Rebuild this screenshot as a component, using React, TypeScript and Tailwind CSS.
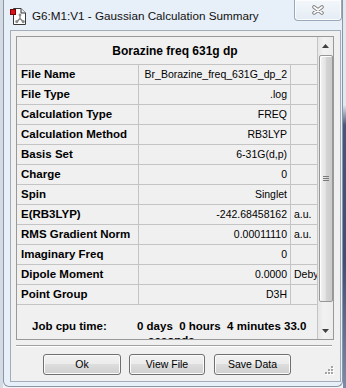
import React from "react";

const rows: [string, string, string][] = [
  ["File Name", "Br_Borazine_freq_631G_dp_2", ""],
  ["File Type", ".log", ""],
  ["Calculation Type", "FREQ", ""],
  ["Calculation Method", "RB3LYP", ""],
  ["Basis Set", "6-31G(d,p)", ""],
  ["Charge", "0", ""],
  ["Spin", "Singlet", ""],
  ["E(RB3LYP)", "-242.68458162", "a.u."],
  ["RMS Gradient Norm", "0.00011110", "a.u."],
  ["Imaginary Freq", "0", ""],
  ["Dipole Moment", "0.0000", "Debye"],
  ["Point Group", "D3H", ""],
];

function AppIcon() {
  return (
    <svg className="ml-[6px] mt-[8px] shrink-0" width="16" height="17" viewBox="0 0 16 17">
      <path d="M3.5 0.5 H11 L15.5 5 V16.5 H3.5 Z" fill="#ffffff" stroke="#3a3a3a" strokeWidth="1" />
      <path d="M11 0.5 V5 H15.5" fill="#e8e8e8" stroke="#3a3a3a" strokeWidth="1" />
      <line x1="10" y1="7" x2="10" y2="10.5" stroke="#7d7d7d" strokeWidth="1.2" />
      <line x1="10" y1="10.5" x2="7" y2="13.5" stroke="#7d7d7d" strokeWidth="1.2" />
      <line x1="10" y1="10.5" x2="13" y2="13.5" stroke="#7d7d7d" strokeWidth="1.2" />
      <circle cx="10" cy="7" r="1.4" fill="#8c8c8c" />
      <circle cx="6.8" cy="13.6" r="1.6" fill="#8c8c8c" />
      <circle cx="13.2" cy="13.6" r="1.6" fill="#8c8c8c" />
      <rect x="0.5" y="1.5" width="5" height="5" fill="#e3101a" stroke="#6a0a0a" strokeWidth="1" />
    </svg>
  );
}

function Btn({ label, w, ml }: { label: string; w: string; ml: string }) {
  return (
    <div
      className={`${w} ${ml} h-[21px] shrink-0 flex items-center justify-center rounded-[3px] border border-[#707070] bg-[linear-gradient(to_bottom,#f2f2f2_0%,#ebebeb_50%,#dddddd_50%,#cfcfcf_100%)] shadow-[inset_0_0_0_1px_#fbfbfb] text-[10.5px] leading-[13px]`}
    >
      {label}
    </div>
  );
}

export default function App() {
  return (
    <div className="w-[346px] h-[388px] overflow-hidden flex font-['Liberation_Sans',Arial,sans-serif] text-black bg-[#f2f5f8]">
      <div className="w-[3px] h-full shrink-0 bg-[#d4dbe3]" />
      <div className="w-[340px] h-[387px] shrink-0 flex flex-col bg-[#e7eff8] border-x border-b border-[#8a96a6] rounded-b-[6px]">
        {/* title bar */}
        <div className="h-[30px] shrink-0 flex items-start">
          <AppIcon />
          <div className="ml-[6px] mt-[8px] text-[11.7px] leading-[16px] whitespace-nowrap text-[#111]">
            G6:M1:V1 - Gaussian Calculation Summary
          </div>
          <div className="ml-auto w-[48px] h-[21px] shrink-0 flex items-center justify-center border-x border-b border-[#9ba8b7] rounded-b-[4px] bg-[linear-gradient(to_bottom,#f3f7fb,#e4ecf4)] shadow-[inset_0_0_0_1px_#fafcfe]">
            <svg width="14" height="10" viewBox="0 0 14 10">
              <path d="M3 2 L11 8 M11 2 L3 8" stroke="#808080" strokeWidth="3.6" strokeLinecap="round" />
              <path d="M3 2 L11 8 M11 2 L3 8" stroke="#fdfdfd" strokeWidth="1.7" strokeLinecap="round" />
            </svg>
          </div>
        </div>

        {/* client area */}
        <div className="relative ml-[6px] mr-[1px] h-[352px] shrink-0 border border-[#a3adba] bg-[#f0f0f0] flex flex-col">
          {/* panel */}
          <div className="ml-[5px] mt-[5px] w-[318px] h-[304px] shrink-0 border border-[#999999] flex overflow-hidden">
            <div className="w-[301px] shrink-0 border-r border-[#c4c4c4] flex flex-col overflow-hidden">
              <div className="h-[28px] shrink-0 border-b border-[#c4c4c4] flex items-center justify-center pl-[16px] font-bold text-[12px] whitespace-nowrap">
                Borazine freq 631g dp
              </div>
              {rows.map(([k, v, u]) => (
                <div key={k} className="h-[20px] shrink-0 border-b border-[#c4c4c4] flex leading-[19px]">
                  <div className="w-[122px] shrink-0 border-r border-[#c4c4c4] pl-[4px] font-bold text-[11.5px] whitespace-nowrap overflow-hidden">
                    {k}
                  </div>
                  <div className="w-[152px] shrink-0 border-r border-[#c4c4c4] pr-[3px] text-right text-[10.5px] whitespace-nowrap overflow-hidden">
                    {v}
                  </div>
                  <div className="flex-1 pl-[3px] text-[10.5px] whitespace-nowrap overflow-hidden">{u}</div>
                </div>
              ))}
              <div className="flex-1 pt-[14px] flex font-bold text-[11.5px] leading-[14px] overflow-hidden">
                <div className="w-[120px] shrink-0 pl-[15px] whitespace-nowrap">Job cpu time:</div>
                <div className="flex flex-col whitespace-pre">
                  <div>{"0 days  0 hours  4 minutes 33.0"}</div>
                  <div className="pl-[11px]">seconds</div>
                </div>
              </div>
            </div>
            {/* scrollbar */}
            <div className="w-[15px] shrink-0 flex flex-col bg-[linear-gradient(to_right,#e6e6e6,#f2f2f2_40%,#ececec)]">
              <div className="h-[17px] shrink-0 flex items-center justify-center">
                <svg width="7" height="4" viewBox="0 0 7 4">
                  <path d="M3.5 0 L7 4 L0 4 Z" fill="#404040" />
                </svg>
              </div>
              <div className="flex-1 flex flex-col">
                <div className="mt-[1px] ml-[1px] w-[14px] h-[247px] rounded-[2px] border border-[#979797] bg-[linear-gradient(to_right,#f4f4f4,#e2e2e2_45%,#d3d3d3_55%,#cbcbcb)] shadow-[inset_1px_1px_0_#fdfdfd] flex flex-col items-center justify-center gap-[1px]">
                  <div className="w-[6px] h-[1px] bg-[#7a7a7a]" />
                  <div className="w-[6px] h-[1px] bg-[#7a7a7a]" />
                  <div className="w-[6px] h-[1px] bg-[#7a7a7a]" />
                </div>
              </div>
              <div className="h-[17px] shrink-0 flex items-center justify-center">
                <svg width="7" height="4" viewBox="0 0 7 4">
                  <path d="M0 0 L7 0 L3.5 4 Z" fill="#404040" />
                </svg>
              </div>
            </div>
          </div>

          {/* separator */}
          <div className="ml-[5px] mt-[5px] w-[316px] h-[2px] shrink-0 border-t border-[#a0a0a0] border-b border-b-white" />

          {/* buttons */}
          <div className="mt-[7px] ml-[32px] flex">
            <Btn label="Ok" w="w-[78px]" ml="ml-0" />
            <Btn label="View File" w="w-[76px]" ml="ml-[8px]" />
            <Btn label="Save Data" w="w-[77px]" ml="ml-[9px]" />
          </div>

          {/* resize grip */}
          <svg className="absolute right-[6px] bottom-[6px]" width="9" height="9" viewBox="0 0 9 9">
            {[
              [6, 0],
              [3, 3],
              [6, 3],
              [0, 6],
              [3, 6],
              [6, 6],
            ].map(([x, y], i) => (
              <g key={i}>
                <rect x={x + 1} y={y + 1} width="2" height="2" fill="#ffffff" />
                <rect x={x} y={y} width="2" height="2" fill="#a4a4a4" />
              </g>
            ))}
          </svg>
        </div>
      </div>
      <div className="w-[3px] h-full shrink-0 bg-[linear-gradient(to_bottom,#e2e8ee_0px,#e2e8ee_105px,#4a5678_125px,#434e70_260px,#7d8aa8_100%)]" />
    </div>
  );
}
